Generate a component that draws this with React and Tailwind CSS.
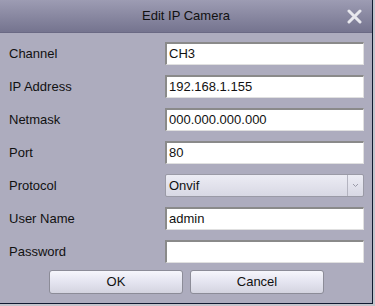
import React from "react";

const fields = [
  { label: "Channel", value: "CH3" },
  { label: "IP Address", value: "192.168.1.155" },
  { label: "Netmask", value: "000.000.000.000" },
  { label: "Port", value: "80" },
  { label: "Protocol", value: "Onvif", select: true },
  { label: "User Name", value: "admin" },
  { label: "Password", value: "" },
];

const App = () => {
  return (
    <div className="w-[375px] h-[306px] bg-[#c4c4cc] font-['Liberation_Sans',Arial,sans-serif] text-[13px] text-[#111]">
      <div className="w-[373px] h-[304px] bg-[#adacbe] border-r border-b border-[#101a30] flex flex-col">
        <div className="h-[33px] flex items-center justify-center relative bg-gradient-to-b from-[#9d9cb3] to-[#75748f] border-b border-[#6a6984]">
          <span className="text-[#111] text-[13px]">Edit IP Camera</span>
          <svg className="absolute right-[10px] top-[9px]" width="15" height="15" viewBox="0 0 15 15">
            <path d="M2 2 L13 13 M13 2 L2 13" stroke="#e8e8ee" strokeWidth="3" strokeLinecap="round" />
          </svg>
        </div>
        <div className="flex flex-col pt-[9px] gap-[10px]">
          {fields.map((f) => (
            <div key={f.label} className="flex items-center h-[23px] pl-[9px]">
              <div className="w-[156px]">{f.label}</div>
              {f.select ? (
                <div className="w-[199px] h-[23px] flex items-center rounded-[2px] border border-[#9a9aa6] bg-gradient-to-b from-[#ececf4] to-[#d8d8e4]">
                  <span className="flex-1 pl-[3px]">{f.value}</span>
                  <div className="w-[16px] h-full border-l border-[#b4b4c0] flex items-center justify-center">
                    <svg width="7" height="5" viewBox="0 0 7 5">
                      <path d="M1 1 L3.5 3.5 L6 1" stroke="#9a9aa8" strokeWidth="1" fill="none" />
                    </svg>
                  </div>
                </div>
              ) : (
                <div className="w-[199px] h-[23px] flex items-center bg-white border-t-2 border-l-2 border-[#8a8a8a] border-r border-b border-r-[#e0e0e0] border-b-[#e0e0e0] pl-[2px]">
                  {f.value}
                </div>
              )}
            </div>
          ))}
        </div>
        <div className="flex gap-[7px] pl-[49px] pt-[7px]">
          <button className="w-[134px] h-[24px] rounded-[3px] border border-[#8c8c98] bg-gradient-to-b from-[#f6f6fc] via-[#e4e4f0] to-[#d4d4e0] text-[13px]">OK</button>
          <button className="w-[134px] h-[24px] rounded-[3px] border border-[#8c8c98] bg-gradient-to-b from-[#f6f6fc] via-[#e4e4f0] to-[#d4d4e0] text-[13px]">Cancel</button>
        </div>
      </div>
    </div>
  );
};

export default App;
